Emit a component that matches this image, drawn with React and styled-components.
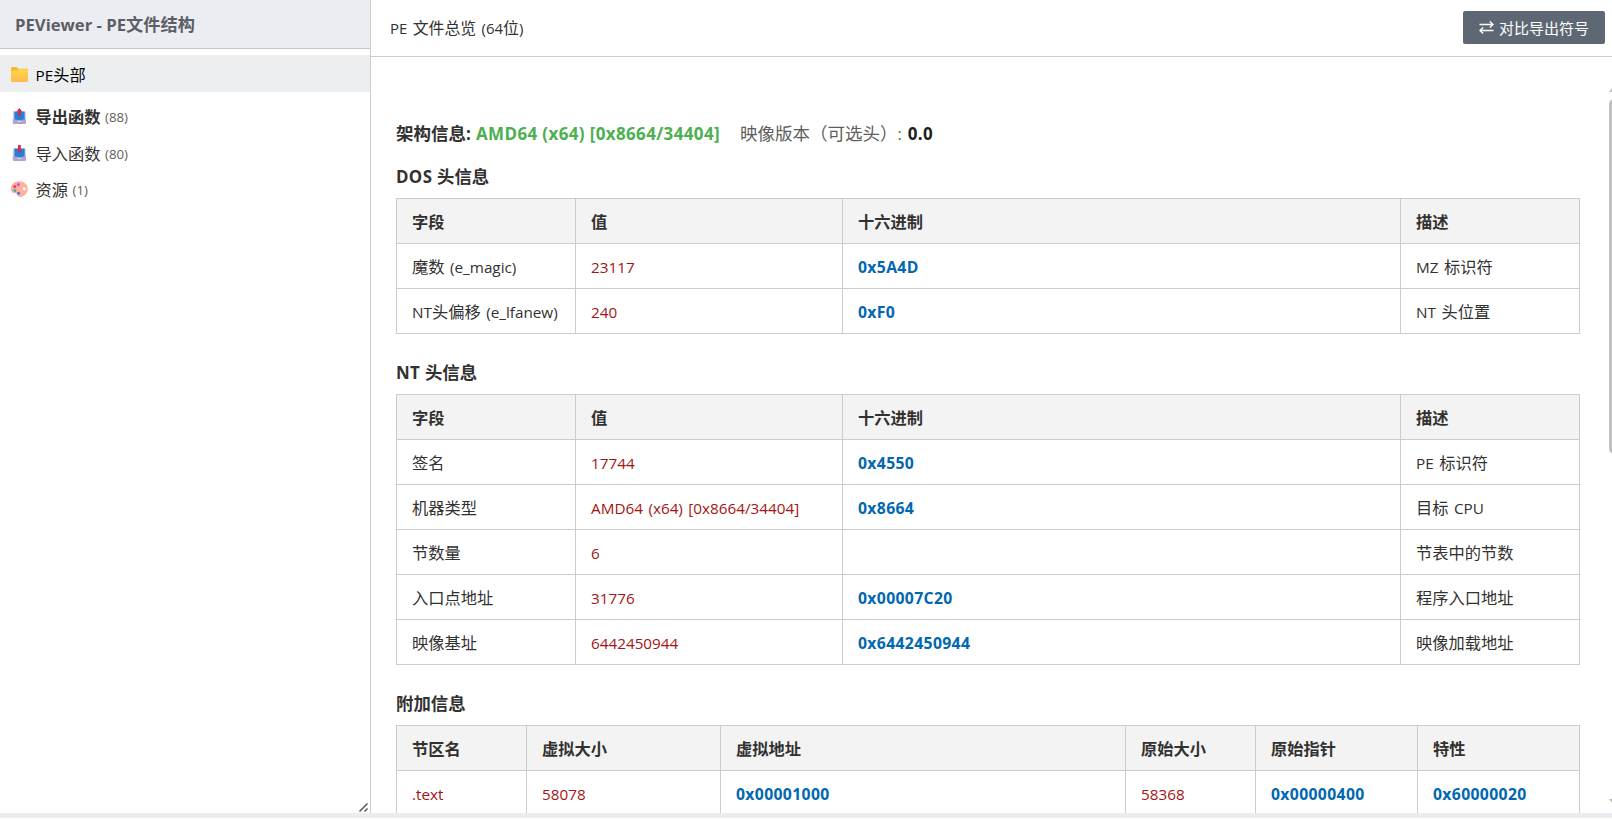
import React from "react";
import styled, { createGlobalStyle } from "styled-components";

const dosRows = [
  ["魔数 (e_magic)", "23117", "0x5A4D", "MZ 标识符"],
  ["NT头偏移 (e_lfanew)", "240", "0xF0", "NT 头位置"],
];

const ntRows = [
  ["签名", "17744", "0x4550", "PE 标识符"],
  ["机器类型", "AMD64 (x64) [0x8664/34404]", "0x8664", "目标 CPU"],
  ["节数量", "6", "", "节表中的节数"],
  ["入口点地址", "31776", "0x00007C20", "程序入口地址"],
  ["映像基址", "6442450944", "0x6442450944", "映像加载地址"],
];

const sectionRows = [
  [".text", "58078", "0x00001000", "58368", "0x00000400", "0x60000020"],
];

const headerTable = {
  columns: ["字段", "值", "十六进制", "描述"],
  widths: [179, 267, 558, 179],
  kinds: ["text", "value", "hex", "text"],
};

const sectionTable = {
  columns: ["节区名", "虚拟大小", "虚拟地址", "原始大小", "原始指针", "特性"],
  widths: [130, 194, 405, 130, 162, 162],
  kinds: ["value", "value", "hex", "value", "hex", "hex"],
};

// latin runs are set a bit smaller than the chinese characters around them
const Mixed = ({ children, bold }) =>
  children
    .split(/([\x20-\x7e]+)/)
    .filter(Boolean)
    .map((part, i) =>
      /^[\x20-\x7e]/.test(part) ? (
        <Latin key={i} $bold={bold}>
          {part}
        </Latin>
      ) : (
        part
      )
    );

const FolderIcon = () => (
  <svg width="18" height="18" viewBox="0 0 18 18">
    <defs>
      <linearGradient id="folder" x1="0" y1="0" x2="0" y2="1">
        <stop offset="0" stopColor="#ffd549" />
        <stop offset="1" stopColor="#ffb84f" />
      </linearGradient>
    </defs>
    <path d="M1 3.3Q1 2 2.3 2H6.5L8.1 3.7H16.7Q18 3.7 18 5V9.5H1Z" fill="#f9b936" />
    <path d="M1 5.7H7L8.5 4.3H16.7Q18 4.3 18 5.5V15.7Q18 17 16.7 17H2.3Q1 17 1 15.7Z" fill="url(#folder)" />
  </svg>
);

const TrayIcon = ({ up }) => (
  <svg width="18" height="18" viewBox="0 0 18 18">
    <path d="M3.2 4.2H15.4L16 13H2.8Z" fill="#cfc5dc" />
    <rect x="4.4" y="4.6" width="10.2" height="9" fill="#2580d2" />
    <path d="M2.8 12.6H6.6L7.6 14.4H11.2L12.2 12.6H16V15.8Q16 17 14.8 17H4Q2.8 17 2.8 15.8Z" fill="#b5a0d0" />
    <path
      d={up ? "M9.4 1L12.4 4.7H10.8V9H8V4.7H6.4Z" : "M8 1H10.8V5H12.4L9.4 8.8L6.4 5H8Z"}
      fill="#d32a5c"
    />
  </svg>
);

const PaletteIcon = () => (
  <svg width="18" height="18" viewBox="0 0 18 18">
    <path
      d="M9 1.3C4.2 1.3.8 4.6.8 8.8C.8 12 3 13.5 5.2 13.3C6.5 13.2 6.9 14 7.2 15.1C7.6 16.6 8.7 17 10.1 16.9C14.6 16.4 17.8 12.9 17.8 8.9C17.8 4.5 13.9 1.3 9 1.3ZM14.2 7.2A1.6 1.6 0 1 1 14.2 10.4A1.6 1.6 0 1 1 14.2 7.2Z"
      fill="#ffb09f"
      fillRule="evenodd"
    />
    <circle cx="8.4" cy="4.4" r="1.5" fill="#b455dc" />
    <circle cx="4.8" cy="6.6" r="1.6" fill="#ef3b72" />
    <circle cx="4.9" cy="10.4" r="1.5" fill="#35b5a5" />
    <circle cx="8.5" cy="13.2" r="1.5" fill="#3a7de0" />
  </svg>
);

const SwapIcon = () => (
  <svg width="15" height="13" viewBox="0 0 15 13" fill="none" stroke="currentColor" strokeWidth="1.4">
    <path d="M0.5 3.5H14M10.8 0.5L14 3.5L10.8 6.5M14.5 9.5H1M4.2 6.5L1 9.5L4.2 12.5" />
  </svg>
);

const Grip = () => (
  <GripSvg width="9" height="9" viewBox="0 0 9 9" stroke="#555" strokeWidth="1.5">
    <path d="M0.5 8.5L8.5 0.5M5.5 8.5L8.5 5.5" />
  </GripSvg>
);

const DataTable = ({ columns, widths, kinds, rows }) => (
  <Table>
    <colgroup>
      {widths.map((width, i) => (
        <Col key={i} $width={width} />
      ))}
    </colgroup>
    <thead>
      <tr>
        {columns.map((name) => (
          <Th key={name}>{name}</Th>
        ))}
      </tr>
    </thead>
    <tbody>
      {rows.map((row) => (
        <tr key={row[0]}>
          {row.map((cell, i) => (
            <Td key={i} $kind={kinds[i]}>
              <Mixed bold={kinds[i] === "hex"}>{cell}</Mixed>
            </Td>
          ))}
        </tr>
      ))}
    </tbody>
  </Table>
);

export default function App() {
  return (
    <>
      <GlobalStyle />
      <Page>
        <Sidebar>
          <SidebarTitle>
            <Mixed bold>PEViewer - PE文件结构</Mixed>
          </SidebarTitle>
          <Tree>
            <TreeItem $selected>
              <FolderIcon />
              <Label>
                <Mixed>PE头部</Mixed>
              </Label>
            </TreeItem>
            <TreeItem>
              <TrayIcon up />
              <Label $bold>导出函数</Label>
              <Count>(88)</Count>
            </TreeItem>
            <TreeItem>
              <TrayIcon />
              <Label>导入函数</Label>
              <Count>(80)</Count>
            </TreeItem>
            <TreeItem>
              <PaletteIcon />
              <Label>资源</Label>
              <Count>(1)</Count>
            </TreeItem>
          </Tree>
          <Grip />
        </Sidebar>
        <Main>
          <Toolbar>
            <span>
              <Mixed>PE 文件总览 (64位)</Mixed>
            </span>
            <CompareButton>
              <SwapIcon />
              对比导出符号
            </CompareButton>
          </Toolbar>
          <Body>
            <Content>
              <Summary>
                <strong>
                  <Mixed bold>架构信息: </Mixed>
                </strong>
                <Arch>
                  <Mixed bold>AMD64 (x64) [0x8664/34404]</Mixed>
                </Arch>
                <Version>
                  <Mixed>映像版本（可选头）: </Mixed>
                  <strong>
                    <Mixed bold>0.0</Mixed>
                  </strong>
                </Version>
              </Summary>
              <Heading>
                <Mixed bold>DOS 头信息</Mixed>
              </Heading>
              <DataTable {...headerTable} rows={dosRows} />
              <Heading>
                <Mixed bold>NT 头信息</Mixed>
              </Heading>
              <DataTable {...headerTable} rows={ntRows} />
              <Heading>附加信息</Heading>
              <DataTable {...sectionTable} rows={sectionRows} />
            </Content>
            <Scrollbar>
              <Arrow viewBox="0 0 10 7">
                <path d="M0 7L5 0L10 7Z" />
              </Arrow>
              <Thumb />
              <Arrow viewBox="0 0 10 7">
                <path d="M0 0L5 7L10 0Z" />
              </Arrow>
            </Scrollbar>
          </Body>
        </Main>
      </Page>
    </>
  );
}

const GlobalStyle = createGlobalStyle`
  * {
    box-sizing: border-box;
  }
  body {
    margin: 0;
    background: #fff;
    color: #323130;
    font-family: "Open Sans", "Noto Sans CJK SC", sans-serif;
    font-size: 16.25px;
    overflow: hidden;
  }
`;

const Latin = styled.span`
  font-size: ${(props) => (props.$bold ? "0.97em" : "0.94em")};
  letter-spacing: ${(props) => (props.$bold ? "0.022em" : "0")};
  word-spacing: ${(props) => (props.$bold ? "0" : "0.1em")};
  white-space: pre;
`;

const Page = styled.div`
  display: flex;
  height: 818px;
  border-bottom: 5px solid #ecedf2;
`;

const Sidebar = styled.aside`
  display: flex;
  flex-direction: column;
  width: 371px;
  flex-shrink: 0;
  border-right: 1px solid #ccc;
`;

const SidebarTitle = styled.div`
  height: 49px;
  padding-left: 15px;
  background: #ecedf2;
  border-bottom: 1px solid #c8c8c8;
  color: #5b5f65;
  font-size: 17.2px;
  font-weight: 700;
  line-height: 49px;

  ${Latin} {
    letter-spacing: 0;
  }
`;

const Tree = styled.div`
  flex: 1;
  padding-top: 6px;
`;

const TreeItem = styled.div`
  display: flex;
  align-items: center;
  height: ${(props) => (props.$selected ? "37px" : "36.5px")};
  margin-bottom: ${(props) => (props.$selected ? "6px" : "0")};
  padding-left: 10px;
  background: ${(props) => (props.$selected ? "#edeeef" : "none")};
  color: ${(props) => (props.$selected ? "#000" : "#323130")};
`;

const Label = styled.span`
  margin-left: 7.5px;
  font-weight: ${(props) => (props.$bold ? 700 : 400)};
`;

const Count = styled.span`
  margin: 2px 0 0 4.5px;
  color: #605e5c;
  font-size: 13.2px;
`;

const GripSvg = styled.svg`
  align-self: flex-end;
  margin: 0 2px 1px 0;
`;

const Main = styled.main`
  display: flex;
  flex-direction: column;
  flex: 1;
  min-width: 0;
`;

const Toolbar = styled.header`
  display: flex;
  align-items: center;
  justify-content: space-between;
  height: 57px;
  flex-shrink: 0;
  padding: 0 7px 1px 19px;
  border-bottom: 1px solid #ccc;
  font-size: 15.9px;
`;

const CompareButton = styled.button`
  display: flex;
  align-items: center;
  justify-content: center;
  gap: 5px;
  width: 142px;
  height: 33px;
  padding: 0;
  border: none;
  border-radius: 2px;
  background: #5e6875;
  color: #fff;
  font-family: inherit;
  font-size: 15px;
`;

const Body = styled.div`
  display: flex;
  flex: 1;
  min-height: 0;
  overflow: hidden;
`;

const Content = styled.div`
  width: 1234px;
  flex-shrink: 0;
  padding: 62px 24px 0 25px;
`;

const Summary = styled.div`
  height: 28px;
  font-size: 17.5px;
  line-height: 28px;
  white-space: pre;
`;

const Arch = styled.strong`
  color: #4caf50;
`;

const Version = styled.span`
  margin-left: 20px;
  color: #605e5c;

  strong {
    color: #201f1e;
  }
`;

const Heading = styled.h3`
  height: 24px;
  margin: 17px 0 10px;
  font-size: 17.4px;
  font-weight: 700;
  line-height: 24px;
  white-space: pre;

  table + & {
    margin-top: 26px;
  }
`;

const Table = styled.table`
  width: 1183px;
  table-layout: fixed;
  border-collapse: collapse;
`;

const Col = styled.col`
  width: ${(props) => props.$width}px;
`;

const Th = styled.th`
  height: 45px;
  padding: 2px 15px 0;
  border: 1px solid #ccc;
  background: #f3f3f3;
  text-align: left;
  line-height: 22px;
`;

const kindColors = { text: "#323130", value: "#a31515", hex: "#0067b0" };

const Td = styled.td`
  height: 45px;
  padding: 2px 15px 0;
  border: 1px solid #ccc;
  color: ${(props) => kindColors[props.$kind]};
  font-weight: ${(props) => (props.$kind === "hex" ? 700 : 400)};
  line-height: 22px;
  white-space: nowrap;
`;

const Scrollbar = styled.div`
  display: flex;
  flex-direction: column;
  width: 14px;
  flex-shrink: 0;
  padding: 28px 0 7px 4px;
`;

const Arrow = styled.svg`
  width: 10px;
  height: 7px;
  flex-shrink: 0;
  fill: #c1c1c1;

  &:last-child {
    margin-top: auto;
  }
`;

const Thumb = styled.div`
  width: 10px;
  height: 355px;
  margin-top: 7px;
  border-radius: 5px;
  background: #c1c1c1;
`;
